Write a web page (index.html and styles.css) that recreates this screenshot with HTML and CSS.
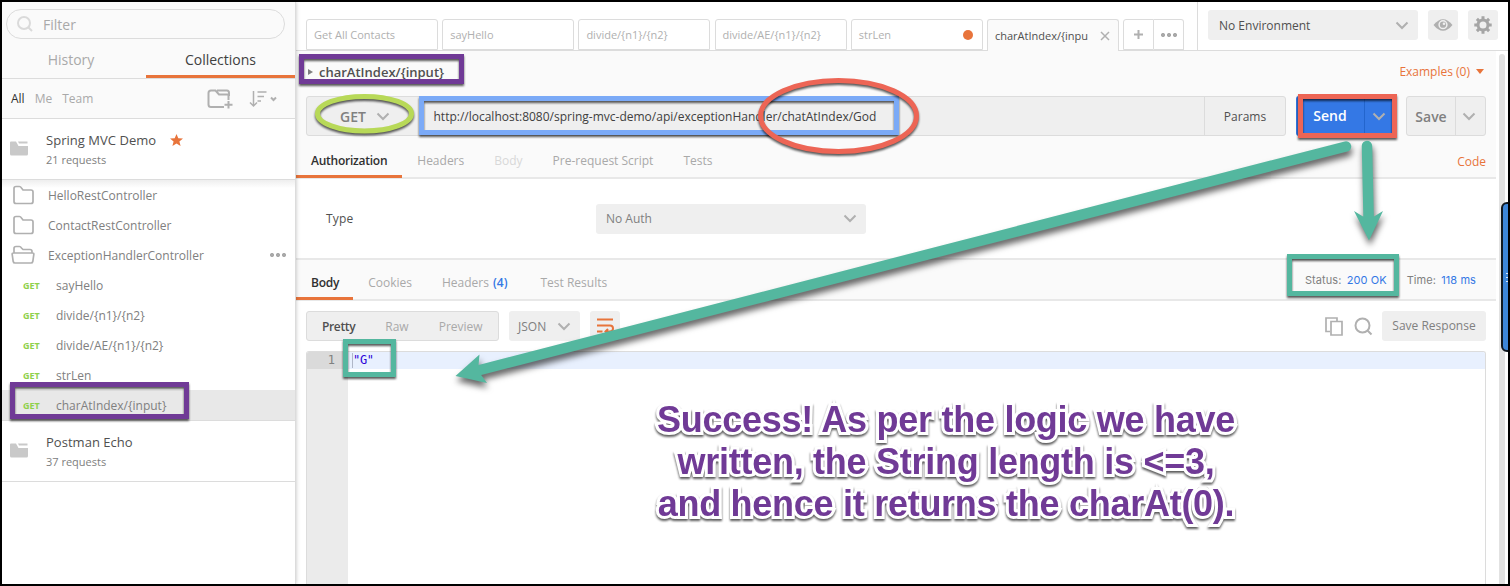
FILE: index.html
```html
<!DOCTYPE html>
<html lang="en">
<head>
<meta charset="utf-8">
<title>Postman</title>
<link rel="stylesheet" href="styles.css">
</head>
<body>
<div class="app">
  <aside class="sidebar">
    <div class="filter">
      <svg class="filter-icon" width="18" height="18" viewBox="0 0 18 18"><circle cx="8" cy="8" r="6" /><path d="M12.5 12.5L16 16" /></svg>
      <span>Filter</span>
    </div>
    <div class="side-tabs"><div class="side-tab">History</div><div class="side-tab active">Collections</div></div>
    <div class="scope">
      <span class="on">All</span><span>Me</span><span>Team</span>
      <svg class="new-folder" width="26" height="20" viewBox="0 0 26 20"><path d="M17 18H4Q1.5 18 1.500 15.500V4Q1.500 1.500 4 1.500H8.500L12 5.500H21.500V11M10 1.500H20Q22 1.500 22 4V7M21.500 12V19.500M17.500 15.700H25.500" /></svg>
      <svg class="sort" width="28" height="18" viewBox="0 0 28 18"><path d="M4.500 1V16M1 12.500L4.500 16L8 12.500M8.500 2H17.500M8.500 6.500H15M8.500 11H12" /><path class="sort-caret" d="M22 7.500L24.500 10L27 7.500" /></svg>
    </div>
    <div class="collection">
      <svg class="coll-icon" width="19" height="15" viewBox="0 0 19 15"><path d="M0 1.500Q0 .5 1 .5H6L8.500 5H18V13Q18 14.500 16.500 14.500H1.500Q0 14.500 0 13ZM8 .5H17.500V2.500H9Z" /></svg>
      <div><div class="coll-name">Spring MVC Demo <svg class="star" width="13" height="12" viewBox="0 0 13 12"><path d="M6.500 0L8.300 4.200L13 4.500L9.400 7.400L10.600 12L6.500 9.500L2.400 12L3.600 7.400L0 4.500L4.700 4.200Z" /></svg></div><div class="coll-count">21 requests</div></div>
    </div>
    <div class="tree">
      <div class="folder"><svg width="24" height="20" viewBox="0 0 24 20"><path d="M3 3.500Q3 1.500 5 1.500H8.500Q9.500 1.500 10.500 3L12 5H20Q22 5 22 7V16.500Q22 18.500 20 18.500H5Q3 18.500 3 16.500Z" /></svg><span>HelloRestController</span></div>
      <div class="folder"><svg width="24" height="20" viewBox="0 0 24 20"><path d="M3 3.500Q3 1.500 5 1.500H8.500Q9.500 1.500 10.500 3L12 5H20Q22 5 22 7V16.500Q22 18.500 20 18.500H5Q3 18.500 3 16.500Z" /></svg><span>ContactRestController</span></div>
      <div class="folder"><svg width="24" height="20" viewBox="0 0 24 20"><path d="M3 8V3.500Q3 1.500 5 1.500H8.500Q9.500 1.500 10.500 3L12 4.500H19Q21 4.500 21 6.500V8M2.500 8H21.500Q23 8 22.800 9.500L21.800 16.500Q21.500 18 20 18H4Q2.500 18 2.200 16.500L1.200 9.500Q1 8 2.500 8Z" /></svg><span>ExceptionHandlerController</span><i class="more"></i></div>
      <div class="req"><b>GET</b><span>sayHello</span></div>
      <div class="req"><b>GET</b><span>divide/{n1}/{n2}</span></div>
      <div class="req"><b>GET</b><span>divide/AE/{n1}/{n2}</span></div>
      <div class="req"><b>GET</b><span>strLen</span></div>
      <div class="req selected"><b>GET</b><span>charAtIndex/{input}</span></div>
    </div>
    <div class="collection last">
      <svg class="coll-icon" width="19" height="15" viewBox="0 0 19 15"><path d="M0 1.500Q0 .5 1 .5H6L8.500 5H18V13Q18 14.500 16.500 14.500H1.500Q0 14.500 0 13ZM8 .5H17.500V2.500H9Z" /></svg>
      <div><div class="coll-name">Postman Echo</div><div class="coll-count">37 requests</div></div>
    </div>
  </aside>

  <main class="main">
    <header class="header">
      <div class="tabs">
        <div class="tab">Get All Contacts</div>
        <div class="tab">sayHello</div>
        <div class="tab">divide/{n1}/{n2}</div>
        <div class="tab">divide/AE/{n1}/{n2}</div>
        <div class="tab">strLen<i class="dot"></i></div>
        <div class="tab current">charAtIndex/{inpu<svg width="10" height="10" viewBox="0 0 10 10"><path d="M1 1L9 9M9 1L1 9" /></svg></div>
        <div class="tab-tools"><div class="tool plus"><svg width="9" height="9" viewBox="0 0 9 9"><path d="M4.500 0V9M0 4.500H9" /></svg></div><div class="tool"><i class="more"></i></div></div>
      </div>
      <div class="env">
        <div class="env-select">No Environment<svg class="chev" width="14" height="9" viewBox="0 0 14 9"><path d="M1.500 1.500L7 7L12.500 1.500" /></svg></div>
        <div class="square"><svg width="20" height="14" viewBox="0 0 20 14"><path class="eye" d="M.5 7Q10-4.500 19.500 7Q10 18.500 .5 7Z" /><circle class="pupil" cx="10" cy="6.700" r="3.900" /><circle class="glint" cx="11" cy="5.700" r="1.300" /></svg></div>
        <div class="square"><svg width="18" height="18" viewBox="-9 -9 18 18"><circle class="gear" r="5" /><g class="teeth"><path d="M0-8.700V-5M0 5V8.700M-8.700 0H-5M5 0H8.700M-6.100-6.100L-3.600-3.600M3.600 3.600L6.100 6.100M-6.100 6.100L-3.600 3.600M3.600-3.600L6.100-6.100" /></g></svg></div>
      </div>
    </header>

    <div class="content">
      <section class="builder">
        <div class="title-row"><i class="tri"></i><span class="req-title">charAtIndex/{input}</span><span class="examples">Examples (0)</span><i class="down"></i></div>
        <div class="url-row">
          <div class="url-bar">
            <div class="method"><span>GET</span><svg class="chev" width="14" height="9" viewBox="0 0 14 9"><path d="M1.500 1.500L7 7L12.500 1.500" /></svg></div>
            <div class="url">http://localhost:8080/spring-mvc-demo/api/exceptionHandler/chatAtIndex/God</div>
            <div class="params">Params</div>
          </div>
          <div class="send"><span>Send</span><i><svg class="chev" width="14" height="9" viewBox="0 0 14 9"><path d="M1.500 1.500L7 7L12.500 1.500" /></svg></i></div>
          <div class="save"><span>Save</span><i><svg class="chev" width="14" height="9" viewBox="0 0 14 9"><path d="M1.500 1.500L7 7L12.500 1.500" /></svg></i></div>
        </div>
        <div class="req-tabs"><span class="act">Authorization</span><span>Headers</span><span class="dis">Body</span><span>Pre-request Script</span><span>Tests</span><span class="code-link">Code</span></div>
      </section>
      <section class="auth"><span>Type</span><div class="auth-select">No Auth<svg class="chev" width="14" height="9" viewBox="0 0 14 9"><path d="M1.500 1.500L7 7L12.500 1.500" /></svg></div></section>
      <div class="res-tabs"><span class="act">Body</span><span>Cookies</span><span class="count">Headers <em>(4)</em></span><span class="results">Test Results</span><div class="stats"><span class="status">Status: <em>200 OK</em></span><span class="time">Time: <em>118 ms</em></span></div></div>
      <div class="viewer-bar">
        <div class="modes"><span class="mode-on">Pretty</span><span>Raw</span><span>Preview</span></div>
        <div class="lang">JSON<svg class="chev" width="14" height="9" viewBox="0 0 14 9"><path d="M1.500 1.500L7 7L12.500 1.500" /></svg></div>
        <div class="wrap"><svg width="18" height="16" viewBox="0 0 18 16"><path d="M1 1.500H17M1 7.500H14Q17 7.500 17 10.500Q17 13.500 14 13.500H9.500M12 11L9.500 13.500L12 16M1 13.500H6.500" /></svg></div>
        <svg class="copy" width="18" height="19" viewBox="0 0 18 19"><path d="M5 14.500H1V1H12V4.500M6 4.500H17V18H6Z" /></svg>
        <svg class="find" width="19" height="19" viewBox="0 0 19 19"><circle cx="8.500" cy="8.500" r="7" /><path d="M13.500 13.500L17.500 17.500" /></svg>
        <div class="save-res">Save Response</div>
      </div>
      <div class="editor"><div class="gutter"><div class="line-no">1</div></div><div class="code"><div class="line"><i class="cursor"></i>"G"</div></div></div>
    </div>
    <div class="scrollbar"></div>
  </main>

  <div class="handle"><i></i></div>

  <svg class="marks" width="1510" height="586" viewBox="0 0 1510 586">
    <g class="boxed">
      <rect class="purple" x="301.500" y="56.500" width="160" height="25" />
      <rect class="purple" x="12.500" y="384.500" width="174" height="32" />
      <ellipse class="lime" cx="364.500" cy="113.700" rx="47" ry="17.300" />
    </g>
    <g class="boxed"><rect class="blue" x="421.500" y="98.500" width="475" height="34" /></g>
    <g class="boxed">
      <ellipse class="red" cx="838.500" cy="116" rx="78" ry="35.500" />
      <rect class="red" x="1300.500" y="96.500" width="94" height="39" />
      <rect class="teal" x="1289.500" y="256.500" width="107" height="37" />
      <rect class="teal" x="345.500" y="341.500" width="48" height="33" />
    </g>
    <g class="arrows">
      <path class="shaft" d="M1346 146.500L478 370.500M1367 146L1368.700 222" />
      <path class="head" d="M455.500 376L479.500 354.500L478.500 365.500L481 374.800L487 383ZM1369 240.500L1354 211L1363 216.500H1374L1383 211Z" />
    </g>
  </svg>
  <div class="note"><p>Success! As per the logic we have</p><p>written, the String length is &lt;=3,</p><p>and hence it returns the charAt(0).</p></div>
</div>
</body>
</html>
```
FILE: styles.css
```css
* { box-sizing: border-box; }
body { margin: 0; font-family: "Open Sans", sans-serif; font-size: 12px; color: #505050; }
svg { display: block; fill: none; stroke: #b0b0b0; flex: none; }
p { margin: 0; }
em { font-style: normal; color: #3478e5; }
.app { position: relative; width: 1510px; height: 586px; border: 2px solid #000; display: flex; background: #fff; overflow: hidden; white-space: nowrap; }

/* Sidebar */
.sidebar { width: 294px; flex: none; border-right: 1px solid #dcdcdc; box-shadow: 0 0 4px rgba(0,0,0,.25); z-index: 1; background: linear-gradient(#fafafa 116px, #fff 116px); }
.filter { margin: 7px 10px 0 4px; height: 30px; border: 1px solid #dcdcdc; border-radius: 15px; display: flex; align-items: center; padding-left: 9px; font-size: 14px; color: #a9a9a9; background: #fafafa; gap: 9px; }
.filter-icon { stroke: #dadada; stroke-width: 2; }
.side-tabs { display: flex; height: 40px; border-bottom: 1px solid #dcdcdc; }
.side-tab { width: 144px; text-align: center; line-height: 42px; font-size: 14px; color: #a9a9a9; padding-right: 6px; height: 39px; }
.side-tab.active { width: 149px; color: #404040; border-bottom: 3px solid #e8743b; padding: 0; }
.scope { display: flex; height: 40px; align-items: center; border-bottom: 1px solid #dcdcdc; padding-left: 9px; color: #a9a9a9; gap: 10px; }
.scope .on { color: #303030; }
.new-folder { margin-left: 104px; stroke-width: 2; }
.sort { margin-left: 6px; stroke-width: 1.500px; }
.sort-caret { stroke-width: 2; }
.collection { height: 61px; border-bottom: 1px solid #dcdcdc; display: flex; padding: 11px 0 0 8px; gap: 17px; background: #fff; }
.coll-icon { fill: #c9c9c9; stroke: none; margin-top: 11px; }
.coll-name { font-size: 13px; line-height: 20px; display: flex; gap: 14px; align-items: center; letter-spacing: .03px; }
.coll-count { font-size: 11px; line-height: 20px; color: #808080; }
.star { fill: #e8743b; stroke: none; }
.tree { border-bottom: 1px solid #dcdcdc; background: linear-gradient(#eee, #fff 8px); color: #808080; }
.folder, .req { height: 30px; display: flex; align-items: center; }
.folder svg { margin: 0 13px 0 9px; stroke-width: 1.700px; }
.more { width: 16px; height: 4px; background: radial-gradient(circle at 2px 2px, #a9a9a9 1.800px, transparent 2.300px) 0 0 / 6px 4px; }
.folder .more { margin-left: auto; margin-right: 9px; }
.req { padding-left: 21px; }
.req b { width: 33px; font-size: 9px; color: #8fd14b; }
.req.selected { background: #e8e8e8; }

/* Header */
.main { flex: 1; min-width: 0; display: grid; grid-template: 49px 1fr / 1200px 1fr; background: #fff; }
.header { grid-column: 1 / 3; display: flex; border-bottom: 1px solid #dcdcdc; }
.tabs { width: 902px; border-right: 1px solid #dcdcdc; padding: 17px 0 0 10px; display: flex; gap: 4.200px; }
.tab { width: 132px; height: 31px; border: 1px solid #dcdcdc; border-radius: 3px 3px 0 0; padding-left: 7px; line-height: 30px; font-size: 11px; color: #b0b0b0; display: flex; align-items: center; }
.tab.current { background: #fafafa; color: #505050; border-bottom: 0; height: 32px; }
.tab svg { margin-left: auto; margin-right: 8px; stroke-width: 1.500px; }
.dot { width: 10px; height: 10px; border-radius: 50%; background: #e8743b; margin: 0 9px 0 auto; }
.tab-tools { display: flex; }
.tool { width: 30px; height: 31px; border: 1px solid #dcdcdc; border-left: 0; display: grid; place-items: center; border-radius: 0 3px 0 0; }
.tool.plus { width: 31px; border-left: 1px solid #dcdcdc; border-radius: 3px 0 0; }
.tool svg { stroke-width: 2; }
.env { display: flex; padding: 8px 0 0 10px; gap: 10px; }
.env-select { width: 210px; height: 30px; background: #efefef; border-radius: 3px; display: flex; align-items: center; justify-content: space-between; padding: 0 9px 0 11px; }
.square { width: 30px; height: 30px; background: #efefef; border-radius: 3px; display: grid; place-items: center; }
.chev { stroke-width: 2px; }
.eye { fill: #b0b0b0; stroke: none; }
.pupil { stroke: #efefef; stroke-width: 1.500px; }
.glint { fill: #efefef; stroke: none; }
.gear, .teeth { stroke: #a5a5a5; stroke-width: 3; }

/* Request builder */
.content { display: flex; flex-direction: column; min-width: 0; }
.builder { height: 128px; background: #fafafa; border-bottom: 2px solid #e8e8e8; }
.title-row { height: 45px; padding: 0 12px 4px; display: flex; align-items: center; }
.tri { border-left: 5px solid #808080; border-top: 3.500px solid transparent; border-bottom: 3.500px solid transparent; margin-right: 6px; }
.req-title { font-size: 13px; font-weight: 600; }
.examples { margin-left: auto; color: #e8743b; }
.down { border-top: 5px solid #e8743b; border-left: 4px solid transparent; border-right: 4px solid transparent; margin-left: 6px; }
.url-row { display: flex; height: 40px; padding-left: 10px; gap: 10px; }
.url-bar { width: 980px; border: 1px solid #dcdcdc; border-radius: 3px; background: #efefef; display: flex; line-height: 39px; }
.method { width: 113px; padding-left: 33px; display: flex; align-items: center; gap: 10px; font-size: 14px; font-weight: 600; color: #808080; }
.url { flex: 1; padding-left: 13.500px; color: #404040; }
.params { width: 81px; border-left: 1px solid #dcdcdc; text-align: center; }
.send, .save { display: flex; line-height: 40px; font-size: 14px; font-weight: 600; }
.send { width: 100px; background: #3478e5; color: #fff; border-radius: 3px; }
.send span { width: 69px; text-align: center; border-right: 1px solid #2365cd; }
.send i, .save i { flex: 1; display: grid; place-items: center; padding-right: 3px; }
.save { width: 80px; border: 1px solid #dcdcdc; border-radius: 3px; background: #efefef; color: #808080; line-height: 39px; }
.save span { width: 49px; text-align: center; border-right: 1px solid #dcdcdc; }
.req-tabs, .res-tabs { display: flex; color: #a9a9a9; line-height: 46px; }
.req-tabs { height: 43px; line-height: 50px; }
.req-tabs span { padding: 0 15px; height: 42px; }
.act { color: #303030; font-weight: 600; letter-spacing: -.25px; border-bottom: 3px solid #e8743b; }
.req-tabs .dis { color: #d8d8d8; }
.req-tabs .code-link { margin-left: auto; color: #e8743b; padding-right: 10px; line-height: 52px; }
.auth { height: 79px; display: flex; align-items: center; padding-left: 30px; }
.auth > span { width: 270px; letter-spacing: .2px; }
.auth-select { width: 270px; height: 30px; border-radius: 3px; background: #efefef; color: #808080; display: flex; align-items: center; justify-content: space-between; padding: 0 9px 0 10px; }

/* Response */
.res-tabs { height: 43px; border-top: 2px solid #e8e8e8; border-bottom: 2px solid #e8e8e8; background: #fafafa; }
.res-tabs > span { padding: 0 15px; height: 40px; }
.res-tabs .act { padding-right: 14px; }
.count em { font-weight: 600; margin-left: 1px; }
.res-tabs .results { padding-left: 18px; }
.stats { margin-left: auto; display: flex; gap: 20px; padding-right: 20px; font-family: Inter, sans-serif; font-size: 11px; letter-spacing: .08px; line-height: 40px; color: #808080; }
.stats em { margin-left: 2px; }
.viewer-bar { height: 50px; display: flex; padding: 10px; align-items: center; }
.modes { width: 193px; height: 30px; border: 1px solid #dcdcdc; border-radius: 3px; background: #efefef; color: #a9a9a9; display: flex; align-items: center; padding-left: 15px; gap: 30px; }
.mode-on { color: #505050; font-weight: 600; letter-spacing: -.35px; }
.lang { width: 71px; height: 30px; margin-left: 10px; background: #efefef; border-radius: 3px; color: #808080; display: flex; align-items: center; justify-content: space-between; padding: 0 9px; }
.wrap { width: 30px; height: 30px; margin-left: 10px; background: #efefef; border-radius: 3px; display: grid; place-items: center; }
.wrap svg { stroke: #e8743b; stroke-width: 2; }
.copy { margin-left: auto; margin-right: 11px; stroke-width: 1.700px; }
.find { stroke-width: 2; margin-right: 9px; }
.save-res { width: 104px; height: 30px; background: #efefef; border-radius: 3px; text-align: center; line-height: 30px; color: #808080; }
.editor { flex: 1; margin: 0 10px; border: 1px solid #dcdcdc; border-bottom: 0; border-radius: 3px 3px 0 0; display: flex; font: 12px/17px "DejaVu Sans Mono", monospace; overflow: hidden; }
.gutter { width: 41px; background: #ebebeb; }
.line-no { background: #dadada; padding-right: 13px; text-align: right; color: #808080; }
.code { flex: 1; }
.line { background: #e8f0fe; padding-left: 4px; color: #2a00d8; display: flex; letter-spacing: -.3px; }
.cursor { width: 1px; background: #b0b7c8; height: 15px; margin-top: 1px; }
.scrollbar { width: 6px; margin: 3px 0 0 3px; background: #e2e2e2; border-radius: 3px 3px 0 0; }
.handle { position: absolute; z-index: 2; left: 1499px; top: 200px; width: 14px; height: 150px; border: 2px solid #101820; border-radius: 6px; background: #3d86d8; }
.handle i { position: absolute; left: 3px; top: 69px; width: 5px; height: 9px; background: repeating-linear-gradient(#d8e8ff 0 1px, transparent 1px 4px); }

/* Callouts drawn over the window */
.marks { position: absolute; left: -2px; top: -2px; z-index: 3; }
.boxed { stroke-width: 5; filter: drop-shadow(0 2px 1px rgba(0,0,0,.65)); }
.purple { stroke: #703a96; }
.lime { stroke: #b8d958; }
.blue { stroke: #7baaf7; }
.red { stroke: #ed6555; }
.teal { stroke: #54b79f; }
.arrows { filter: drop-shadow(1px 5px 3px rgba(0,0,0,.6)); }
.shaft { stroke: #54b79f; stroke-width: 10.500px; stroke-linecap: round; }
.head { stroke: none; fill: #54b79f; }
.note { position: absolute; z-index: 4; left: 652px; top: 397px; width: 584px; text-align: center; font: bold 36px/42px "Liberation Sans", sans-serif; letter-spacing: -.27px; color: #703a96; -webkit-text-stroke: 6px #fff; paint-order: stroke fill; filter: drop-shadow(0 2px 1px rgba(0,0,0,.65)); }
```
